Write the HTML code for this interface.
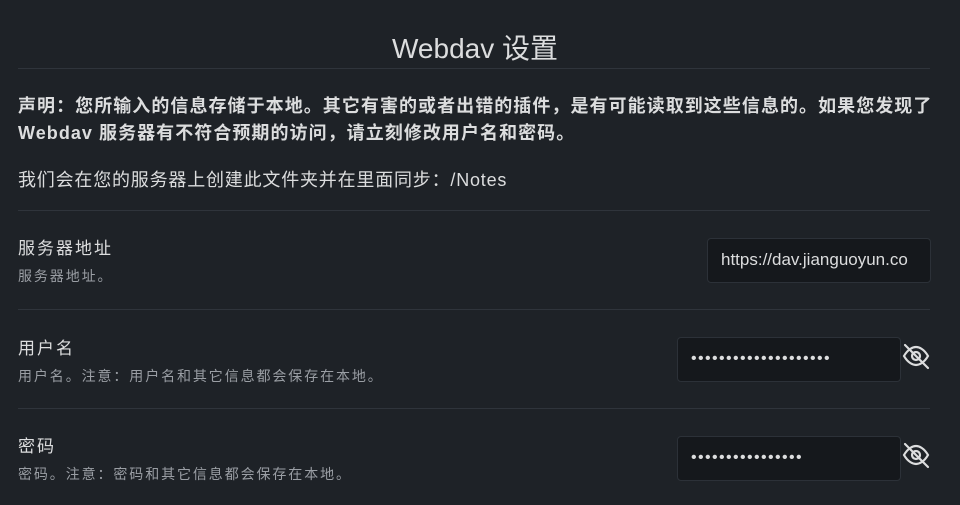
<!DOCTYPE html><html><head><meta charset="utf-8"><style>
body{margin:0;width:960px;height:505px;background:#1e2227;color:#dcddde;font-family:"Liberation Sans","Noto Sans CJK SC",sans-serif;position:relative;overflow:hidden}
.a{position:absolute;white-space:nowrap}
.hr{position:absolute;left:18px;width:912px;height:1px;background:#2f343b}
.in{position:absolute;background:#15181c;border:1px solid #2c3138;border-radius:4px;box-sizing:border-box;color:#dcddde;font-size:17px;padding-left:13px;line-height:42px;overflow:hidden;white-space:nowrap}
.n{font-size:17px;color:#dcddde;letter-spacing:2px}.d{font-size:14px;color:#9a9ea4;letter-spacing:1.9px}
.pw{letter-spacing:1.4px;font-size:16px}
</style></head><body>
<div class="a" style="left:0;width:950px;text-align:center;top:27px;font-size:28px;color:#dcddde">Webdav 设置</div>
<div class="hr" style="top:68px"></div>
<div class="a" style="left:18px;top:93px;font-size:18px;font-weight:bold;line-height:27px;letter-spacing:1.05px">声明：您所输入的信息存储于本地。其它有害的或者出错的插件，是有可能读取到这些信息的。如果您发现了<br>Webdav 服务器有不符合预期的访问，请立刻修改用户名和密码。</div>
<div class="a" style="left:18px;top:166px;font-size:18px;letter-spacing:0.8px">我们会在您的服务器上创建此文件夹并在里面同步：/Notes</div>
<div class="hr" style="top:210px"></div>
<div class="a n" style="left:18px;top:234px">服务器地址</div>
<div class="a d" style="left:18px;top:266px">服务器地址。</div>
<div class="in" style="left:707px;top:238px;width:224px;height:45px">https://dav.jianguoyun.co</div>
<div class="hr" style="top:309px"></div>
<div class="a n" style="left:18px;top:334px">用户名</div>
<div class="a d" style="left:18px;top:366px">用户名。注意：用户名和其它信息都会保存在本地。</div>
<div class="in pw" style="left:677px;top:337px;width:224px;height:45px">••••••••••••••••••••</div>
<div class="hr" style="top:408px"></div>
<div class="a n" style="left:18px;top:432px">密码</div>
<div class="a d" style="left:18px;top:464px">密码。注意：密码和其它信息都会保存在本地。</div>
<div class="in pw" style="left:677px;top:436px;width:224px;height:45px">••••••••••••••••</div>
<svg class="a" style="left:901px;top:341px" width="30" height="30" viewBox="0 0 30 30" fill="none" stroke="#dcddde" stroke-width="2.2" stroke-linecap="round"><path d="M3 15C7 8 12 6 15 6s8 2 12 9c-4 7-9 9-12 9S7 22 3 15z"/><circle cx="15" cy="15" r="4"/><path d="M4 4l23 23"/></svg>
<svg class="a" style="left:901px;top:440px" width="30" height="30" viewBox="0 0 30 30" fill="none" stroke="#dcddde" stroke-width="2.2" stroke-linecap="round"><path d="M3 15C7 8 12 6 15 6s8 2 12 9c-4 7-9 9-12 9S7 22 3 15z"/><circle cx="15" cy="15" r="4"/><path d="M4 4l23 23"/></svg>
</body></html>
